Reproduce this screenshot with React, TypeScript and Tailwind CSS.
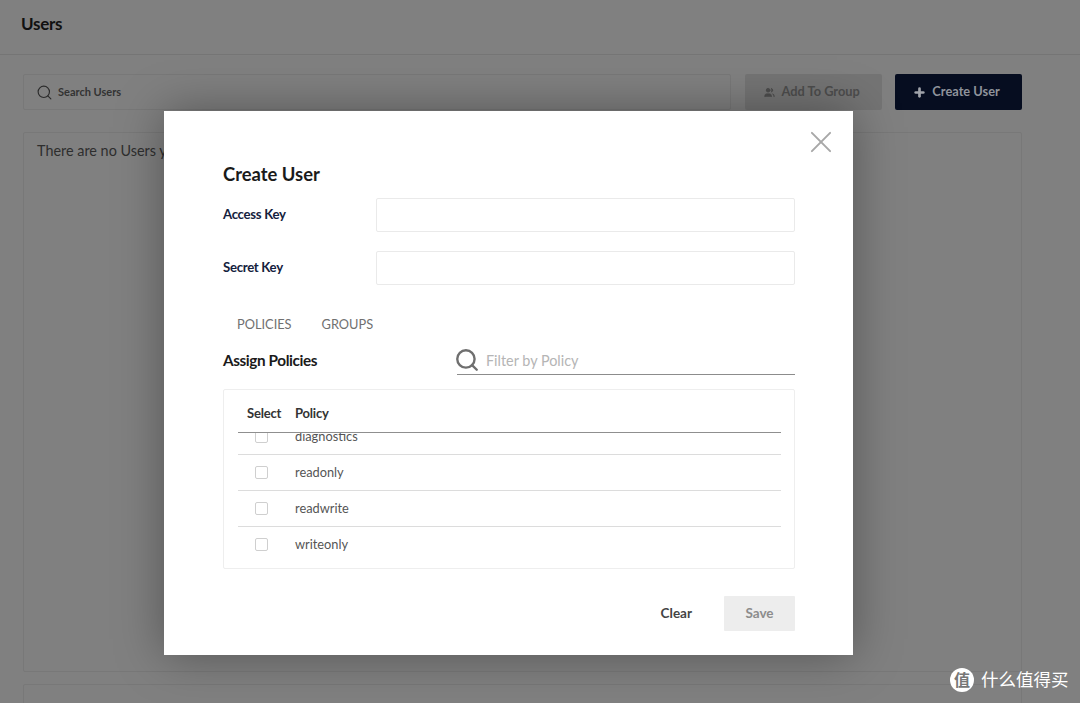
import { Plus, Search, Users, X } from "lucide-react";

const policies = ["diagnostics", "readonly", "readwrite", "writeonly"];

function PolicyRow({ name, clipped }: { name: string; clipped?: boolean }) {
  return (
    <div className={`flex h-9 shrink-0 items-center border-b border-[#dcdcdc] ${clipped ? "-mt-[14px]" : ""}`}>
      <div className="flex w-[57px] pl-[17px]">
        <span className="h-[13px] w-[13px] rounded-[2px] border border-[#cfcfcf] bg-white"></span>
      </div>
      <span className="text-[12.8px] text-[#555]">{name}</span>
    </div>
  );
}

function Field({ label }: { label: string }) {
  return (
    <div className="flex h-[34px] items-center">
      <label className="w-[153px] text-[13.2px] font-bold tracking-[-0.3px] text-[#14213d]">{label}</label>
      <input className="h-[34px] flex-1 rounded-[2px] border border-[#eaeaea] bg-white" />
    </div>
  );
}

export default function App() {
  return (
    <div className="relative h-[703px] w-[1080px] overflow-hidden bg-[#808080] font-['Lato','Noto_Sans_CJK_SC',sans-serif]">
      {/* PAGE BEHIND THE DIALOG */}
      <header className="flex h-[55px] items-center border-b border-[#757575] px-[21px] pb-[8px]">
        <h1 className="text-[17px] leading-none font-bold tracking-[-0.3px] text-[#111]">Users</h1>
      </header>

      <main className="flex flex-col gap-[12px] pt-[19px] pr-[58px] pl-[23px]">
        <div className="flex h-[36px] gap-[13px]">
          <div className="flex w-[709px] items-center gap-[5px] rounded-[2px] border border-[#787878] pl-[12px]">
            <Search size={17} strokeWidth={1.6} className="text-[#2b2b2b]" />
            <span className="text-[11px] font-bold text-[#333]">Search Users</span>
          </div>
          <button className="ml-px flex w-[137px] items-center justify-center gap-[7px] rounded-[2px] bg-[#747474] pr-[4px] text-[12.8px] font-bold text-[#4d4d4d]">
            <Users size={11} fill="#4d4d4d" strokeWidth={2} />
            Add To Group
          </button>
          <button className="flex w-[127px] items-center justify-center gap-[6px] rounded-[2px] bg-[#060d20] pr-[4px] text-[12.8px] font-bold text-[#8f939b]">
            <Plus size={13} strokeWidth={5} className="text-[#a0a3aa]" />
            Create User
          </button>
        </div>
        <section className="mt-[10px] h-[540px] rounded-[2px] border border-[#787878] px-[13px] py-[7px]">
          <p className="text-[14.4px] text-[#2e2e2e]">There are no Users yet.</p>
        </section>
        <section className="h-[40px] rounded-[2px] border border-[#787878]"></section>
      </main>

      {/* MODAL */}
      <div className="absolute top-[111px] left-[164px] flex h-[544px] w-[689px] flex-col bg-white pr-[58px] pl-[59px] shadow-[0_0_45px_rgba(0,0,0,0.35)]">
        <button className="absolute top-[17px] right-[18px] text-[#a8a8a8]">
          <X size={28} strokeWidth={1.3} className="scale-[1.3]" />
        </button>

        <h2 className="mt-[51px] text-[18.4px] leading-[24px] font-bold text-[#1a1a1a]">Create User</h2>

        <div className="mt-[12px] flex flex-col gap-[19px]">
          <Field label="Access Key" />
          <Field label="Secret Key" />
        </div>

        <div className="mt-[31px] flex gap-[30px] pl-[14px] text-[12.8px] leading-[16px] text-[#707070]">
          <span>POLICIES</span>
          <span>GROUPS</span>
        </div>

        <div className="mt-[13px] flex h-[30px] items-center justify-between">
          <h3 className="text-[15.3px] font-bold tracking-[-0.4px] text-[#1a1a1a]">Assign Policies</h3>
          <div className="flex h-[30px] w-[338px] items-center gap-[6px] border-b border-[#8c8c8c]">
            <Search size={26} strokeWidth={2.2} className="-ml-[3px] text-[#6f6f6f]" />
            <span className="pt-[2px] text-[14.4px] text-[#b5b5b5]">Filter by Policy</span>
          </div>
        </div>

        <div className="mt-[14px] flex h-[180px] flex-col rounded-[2px] border border-[#eeeeee] pr-[13px] pb-[6px] pl-[14px]">
          <div className="flex h-[43px] shrink-0 items-center border-b border-[#8f8f8f] pt-[6px] text-[13px] font-bold tracking-[-0.2px] text-[#333]">
            <span className="w-[57px] pl-[9px]">Select</span>
            <span>Policy</span>
          </div>
          <div className="flex flex-col overflow-hidden">
            {policies.map((p, i) => (
              <PolicyRow key={p} name={p} clipped={i === 0} />
            ))}
          </div>
        </div>

        <div className="mt-[27px] flex h-[35px] items-center justify-end">
          <button className="mr-[32px] text-[13.5px] font-bold text-[#444]">Clear</button>
          <button className="h-[35px] w-[71px] rounded-[1px] bg-[#ededed] text-[13.5px] font-bold text-[#8c8c8c]">Save</button>
        </div>
      </div>

      {/* WATERMARK */}
      <div className="absolute top-[668px] left-[950px] flex items-center gap-[7px]">
        <span className="flex h-[24px] w-[24px] items-center justify-center rounded-full bg-white text-[16px] leading-none font-bold text-[#777]">值</span>
        <span className="text-[17.5px] leading-[24px] text-white">什么值得买</span>
      </div>
    </div>
  );
}
